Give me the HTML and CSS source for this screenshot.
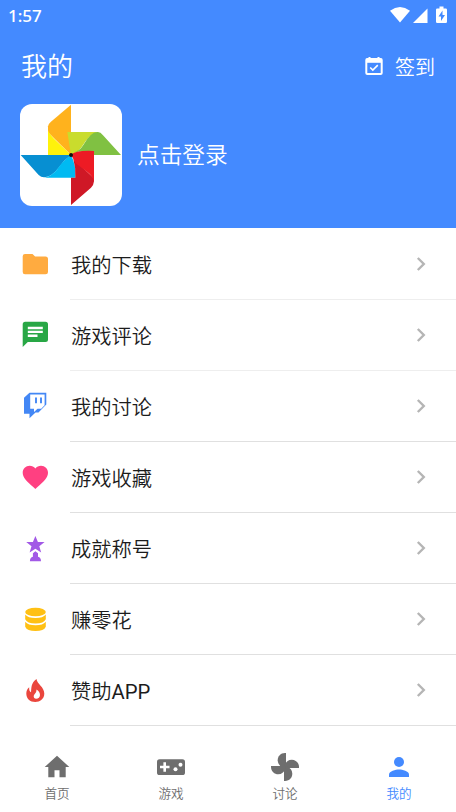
FILE: index.html
```html
<!DOCTYPE html>
<html lang="zh-CN">
<head>
<meta charset="utf-8">
<meta name="viewport" content="width=device-width, initial-scale=1">
<title>我的</title>
<link rel="stylesheet" href="styles.css">
</head>
<body>
<header class="header">
  <div class="status">
    <span class="time">1:57</span>
    <svg class="status-icons" width="60" height="20" viewBox="0 0 60 20" fill="#fff">
      <path d="M1 5.7Q11 -1.5 21 5.7L11 17.5Z"/>
      <path d="M24 18L38.5 3.5V18Z"/>
      <path fill-rule="evenodd" d="M50.5 1.5h4v2h2.2q1.3 0 1.3 1.3v12q0 1.3-1.3 1.3h-8.4q-1.3 0-1.3-1.3v-12q0-1.3 1.3-1.3h2.2ZM53.5 5.500l-4 6h2.500v4.500l4-6h-2.500Z"/>
    </svg>
  </div>
  <div class="titlebar">
    <h1 class="title">我的</h1>
    <div class="checkin">
      <svg width="20" height="20" viewBox="0 0 20 20" fill="none" stroke="#fff" stroke-width="2">
        <rect x="2.300" y="3" width="15.400" height="15" rx="1"/>
        <path d="M2 4.800h16" stroke-width="4"/><path d="M5.500 1v4M14.500 1v4"/>
        <path d="M6.200 11.500l2.600 2.600 5-5" stroke-width="1.600"/>
      </svg>
      <span>签到</span>
    </div>
  </div>
  <div class="profile">
    <svg class="avatar" width="102" height="102" viewBox="30 27 306 306">
      <path fill="#ffb21d" d="M183 29V180L114 112V94Q115 87 122 81Z"/>
      <path fill="#fff20b" d="M114 106Q119 120 139 138L183 180Q155 194 114 192Z"/>
      <path fill="#c9dc2d" d="M172 111H268Q238 116 215 156L202 171L183 180Z"/>
      <path fill="#80c142" d="M190 170Q207 171 220 150Q242 111 262 111Q271 110 279 121L333 180H252V169Z"/>
      <path fill="#078fd2" d="M32 180H183Q162 195 146 218Q125 245 104 247Q94 248 86 240Z"/>
      <path fill="#00baf2" d="M183 180Q199 211 196 248H104Q127 242 143 221Q157 199 183 180Z"/>
      <path fill="#cf1826" d="M190 192L252 250V259Q251 271 243 278L183 330V248H196Q198 220 190 192Z"/>
      <path fill="#ed1b24" d="M183 180Q197 165 252 168V260Q249 244 232 231L196 204Q192 194 183 180Z"/>
      <circle cx="183" cy="180" r="6" fill="#111"/>
    </svg>
    <span class="login">点击登录</span>
  </div>
</header>
<main class="menu">
  <div class="row">
    <svg class="icon" viewBox="0 0 32 32"><path fill="#ffab40" d="M6 6h7.500l2.600 2.500H26.500q2.500 0 2.500 2.500v13q0 2.300-2.500 2.300H6q-2.300 0-2.300-2.300V8.300Q3.700 6 6 6Z"/></svg>
    <div class="cell"><span>我的下载</span><svg class="arrow" viewBox="0 0 12 16"><path d="M2.800 2l6 6-6 6"/></svg></div>
  </div>
  <div class="row">
    <svg class="icon" viewBox="0 0 32 32"><path fill="#28a745" d="M6.200 2.700h20.300Q29 2.700 29 5.200v15.300q0 2.500-2.500 2.500H8.800l-5.100 5V5.200q0-2.500 2.500-2.500Z"/><path stroke="#fff" stroke-width="2.400" d="M8.800 9h15M8.800 12.900h15M8.800 16.700h9.700"/></svg>
    <div class="cell"><span>游戏评论</span><svg class="arrow" viewBox="0 0 12 16"><path d="M2.800 2l6 6-6 6"/></svg></div>
  </div>
  <div class="row">
    <svg class="icon" viewBox="0 0 32 32"><path fill="#4387f5" fill-rule="evenodd" d="M10.500 2.700H27.300V14.500L19.500 22.500H16.500L10.500 28.300V23.700H5V7.800ZM11.200 4.500V18.700H15V22L18.500 18.700H22.200L25.600 15.200V4.500Z"/><path stroke="#4387f5" stroke-width="1.900" d="M17 7.500v5.800M22 7.500v5.800"/></svg>
    <div class="cell"><span>我的讨论</span><svg class="arrow" viewBox="0 0 12 16"><path d="M2.800 2l6 6-6 6"/></svg></div>
  </div>
  <div class="row">
    <svg class="icon" viewBox="0 0 32 32"><path fill="#ff4081" d="M16.350 28L14.500 26.300C8 20.500 3.700 16.600 3.700 11.700C3.700 7.700 6.800 4.700 10.700 4.700C12.900 4.700 15 5.700 16.350 7.400C17.700 5.700 19.800 4.700 22 4.700C25.900 4.700 29 7.700 29 11.700C29 16.600 24.700 20.500 18.200 26.300Z"/></svg>
    <div class="cell"><span>游戏收藏</span><svg class="arrow" viewBox="0 0 12 16"><path d="M2.800 2l6 6-6 6"/></svg></div>
  </div>
  <div class="row">
    <svg class="icon" viewBox="0 0 32 32" fill="#a259e6"><path d="M16.400 4l2.500 6h6.700l-5.300 4.200 1.900 6.300-5.800-3.700-5.800 3.700 1.900-6.300L7.200 10h6.700Z"/><path d="M16.400 19.200l2.600 2v3.600q3 .5 3 4.500H10.900q0-4 3-4.500V21.200Z"/></svg>
    <div class="cell"><span>成就称号</span><svg class="arrow" viewBox="0 0 12 16"><path d="M2.800 2l6 6-6 6"/></svg></div>
  </div>
  <div class="row">
    <svg class="icon" viewBox="0 0 32 32" fill="#ffc014"><ellipse cx="16.500" cy="9" rx="10.300" ry="4.300"/><path d="M6.200 11.500Q9 15 16.500 15T26.800 11.500V16.300Q25 20.500 16.500 20.500T6.200 16.300Z"/><path d="M6.200 18.800Q9 22.300 16.500 22.300T26.800 18.800V23.700Q25 28 16.500 28T6.200 23.700Z"/></svg>
    <div class="cell"><span>赚零花</span><svg class="arrow" viewBox="0 0 12 16"><path d="M2.800 2l6 6-6 6"/></svg></div>
  </div>
  <div class="row">
    <svg class="icon" viewBox="0 0 32 32"><path fill="#ea463d" fill-rule="evenodd" d="M17.500 5C18 10 25.300 13 25.300 19.500C25.300 25 21 28 16.300 28C11 28 7.300 24.500 7.300 19.500C7.300 17 8.300 14.800 10.200 13.300C10 16 10.500 17.700 12 18.200C12.500 13.500 12 9 17.500 5ZM17.400 15.500C17.800 18.500 15.600 19.700 14.900 21.300C14.200 23.300 15.300 24.700 17.200 24.700C19.400 24.700 21 23.400 21 21C21 18.500 19.500 16.500 17.400 15.500Z"/></svg>
    <div class="cell"><span>赞助<b class="latin">APP</b></span><svg class="arrow" viewBox="0 0 12 16"><path d="M2.800 2l6 6-6 6"/></svg></div>
  </div>
</main>
<nav class="nav">
  <div class="tab">
    <svg class="icon" viewBox="0 0 32 32"><path fill="currentColor" d="M13.500 26.200v-7h5v7h6.200V16H28.300L16 4.800 3.700 16H7.300V26.200Z"/></svg>
    <span>首页</span>
  </div>
  <div class="tab">
    <svg class="icon" viewBox="0 0 32 32"><rect fill="currentColor" x="2" y="8.300" width="28" height="15.700" rx="2.600"/><path stroke="#fff" stroke-width="2.600" d="M5 16h9.500M9.700 11.300v9.500"/><circle fill="#fff" cx="20.500" cy="18.200" r="2"/><circle fill="#fff" cx="25.500" cy="13.700" r="2"/></svg>
    <span>游戏</span>
  </div>
  <div class="tab">
    <svg class="icon" viewBox="0 0 32 32" fill="currentColor">
      <path id="blade" d="M16 2C11.500 2 8.700 5.500 8.700 9.200C8.700 12.800 11 15 13.500 16.200L17 17V2Z"/>
      <use href="#blade" transform="rotate(90 16 16)"/>
      <use href="#blade" transform="rotate(180 16 16)"/>
      <use href="#blade" transform="rotate(270 16 16)"/>
    </svg>
    <span>讨论</span>
  </div>
  <div class="tab active">
    <svg class="icon" viewBox="0 0 32 32" fill="currentColor"><circle cx="16" cy="11" r="5"/><path d="M6 26v-2.500C6 20.200 12.700 18.500 16 18.500S26 20.200 26 23.500V26Z"/></svg>
    <span>我的</span>
  </div>
</nav>
</body>
</html>
```
FILE: styles.css
```css
* { box-sizing: border-box; }

body {
  margin: 0;
  height: 812px;
  display: flex;
  flex-direction: column;
  overflow: hidden;
  background: #fff;
  color: #1c1c1c;
  font-family: Roboto, "Noto Sans CJK SC", sans-serif;
  font-weight: 350;
}

svg { display: block; flex: none; }

.header {
  height: 228px;
  background: #448aff;
  color: #fff;
}

.status {
  height: 32px;
  padding: 0 7px 0 8px;
  display: flex;
  align-items: center;
  justify-content: space-between;
}

.time {
  padding-bottom: 2px;
  font-family: "Noto Sans", sans-serif;
  font-size: 17px;
  font-weight: 500;
}

.status-icons { margin-bottom: 2px; }

.titlebar {
  height: 68px;
  padding: 0 21px;
  display: flex;
  align-items: center;
  justify-content: space-between;
}

.title {
  margin: 0;
  padding-bottom: 3px;
  font-size: 26px;
  font-weight: 350;
}

.checkin {
  display: flex;
  align-items: center;
  gap: 11px;
  font-size: 20px;
}

.profile {
  padding: 4px 20px;
  display: flex;
  align-items: center;
  gap: 15px;
}

.avatar {
  border-radius: 12px;
  background: #fff;
}

.login {
  padding-bottom: 3px;
  font-size: 22.7px;
}

.row {
  height: 71px;
  padding-left: 19px;
  display: flex;
  align-items: center;
  gap: 19px;
}

.icon {
  width: 32px;
  height: 32px;
}

.cell {
  flex: 1;
  height: 71px;
  margin-top: 1px;
  padding: 0 29px 0 1px;
  display: flex;
  align-items: center;
  justify-content: space-between;
  border-bottom: 1px solid #e0e0e0;
  font-size: 20.3px;
}

.row:nth-child(-n+2) .cell { border-bottom-color: #eee; }

.latin { font-weight: 400; }

.arrow {
  width: 12px;
  height: 16px;
  fill: none;
  stroke: #b5b5b5;
  stroke-width: 2.4;
}

.nav {
  flex: 1;
  padding-top: 26px;
  display: grid;
  grid-template-columns: repeat(4, 1fr);
}

.tab {
  display: flex;
  flex-direction: column;
  align-items: center;
  color: #6e6e6e;
  font-size: 12.6px;
  line-height: 21px;
}

.active { color: #448aff; }
```
